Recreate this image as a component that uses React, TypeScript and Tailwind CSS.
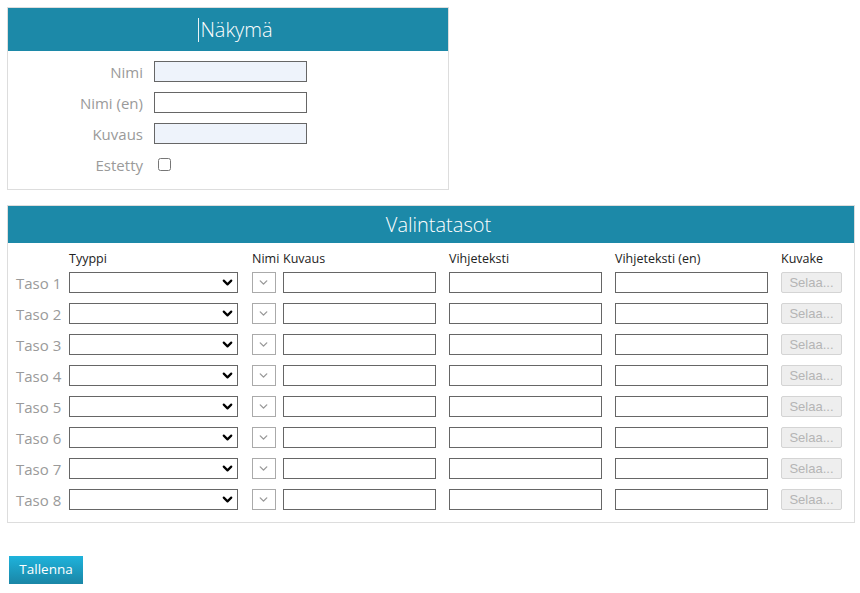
import { ChevronDown } from "lucide-react"

const FIELDS = [
    { label: "Nimi", tinted: true },
    { label: "Nimi (en)", tinted: false },
    { label: "Kuvaus", tinted: true },
]

const LEVELS = [1, 2, 3, 4, 5, 6, 7, 8]

const GRID = "grid grid-cols-[53px_183px_31px_166px_166px_166px_61px] items-center"

function TextBox({ tinted = false }: { tinted?: boolean }) {
    return (
        <input
            type="text"
            className={
                "w-[153px] h-[21px] border border-[#666] outline-none px-1 text-[13px] " +
                (tinted ? "bg-[#eef3fb]" : "bg-white")
            }
        />
    )
}

export default function App() {
    return (
        <div className="min-h-[593px] bg-white pt-[7px] pl-[7px] font-['Open_Sans',sans-serif]">
            {/* Näkymä */}
            <section className="w-[442px] border border-[#dddddd]">
                <div className="h-[43px] bg-[#1c89a8] flex items-center justify-center pl-[15px]">
                    <span className="w-px h-[24px] bg-white/90 mr-px" />
                    <h2 className="text-white text-[20px] font-light leading-none">Näkymä</h2>
                </div>
                <div className="flex flex-col gap-[10px] pt-[10px] pb-[14px]">
                    {FIELDS.map((f) => (
                        <div key={f.label} className="flex items-center gap-[11px]">
                            <label className="w-[135px] text-right text-[15px] leading-none text-[#9a9a9a] pt-px">{f.label}</label>
                            <TextBox tinted={f.tinted} />
                        </div>
                    ))}
                    <div className="flex items-center gap-[11px] h-[21px]">
                        <label className="w-[135px] text-right text-[15px] leading-none text-[#9a9a9a] pt-px">Estetty</label>
                        <input type="checkbox" className="w-[13px] h-[13px] ml-[4px]" />
                    </div>
                </div>
            </section>

            {/* Valintatasot */}
            <section className="w-[848px] mt-[15px] border border-[#dddddd] pl-[8px] pb-[12px]">
                <div className="-ml-[8px] h-[37px] bg-[#1c89a8] flex items-center justify-center pl-[15px]">
                    <h2 className="text-white text-[20px] font-light leading-none">Valintatasot</h2>
                </div>

                <div className={GRID + " h-[20px] mt-[6px] mb-[3px] text-[12.5px] leading-none text-[#222]"}>
                    <span />
                    <span>Tyyppi</span>
                    <span>Nimi</span>
                    <span>Kuvaus</span>
                    <span>Vihjeteksti</span>
                    <span>Vihjeteksti (en)</span>
                    <span>Kuvake</span>
                </div>

                <div className="flex flex-col gap-[10px]">
                    {LEVELS.map((n) => (
                        <div key={n} className={GRID + " h-[21px]"}>
                            <span className="text-[15px] leading-none text-[#9a9a9a] pt-[2px]">Taso {n}</span>
                            <div className="relative w-[169px] h-[21px]">
                                <select className="appearance-none w-full h-full border border-[#666] bg-white outline-none" />
                                <ChevronDown
                                    className="absolute right-[3px] top-[3px] size-[15px] text-black pointer-events-none"
                                    strokeWidth={3.5}
                                />
                            </div>
                            <div className="relative w-[24px] h-[21px]">
                                <select disabled className="appearance-none w-full h-full border border-[#aaaaaa] bg-white" />
                                <ChevronDown
                                    className="absolute left-[5px] top-[4px] size-[13px] text-[#999] pointer-events-none"
                                    strokeWidth={2.5}
                                />
                            </div>
                            <TextBox />
                            <TextBox />
                            <TextBox />
                            <button
                                disabled
                                className="w-[61px] h-[21px] rounded-[2px] border border-[#d4d4d4] bg-[#eeeeee] text-[13px] leading-none text-[#b5b5b5] font-['Liberation_Sans',sans-serif]"
                            >
                                Selaa...
                            </button>
                        </div>
                    ))}
                </div>
            </section>

            <button className="mt-[33px] ml-[2px] w-[74px] h-[28px] bg-gradient-to-b from-[#1eb3dc] to-[#1a86a6] text-white text-[13.5px] leading-none">
                Tallenna
            </button>
        </div>
    )
}
